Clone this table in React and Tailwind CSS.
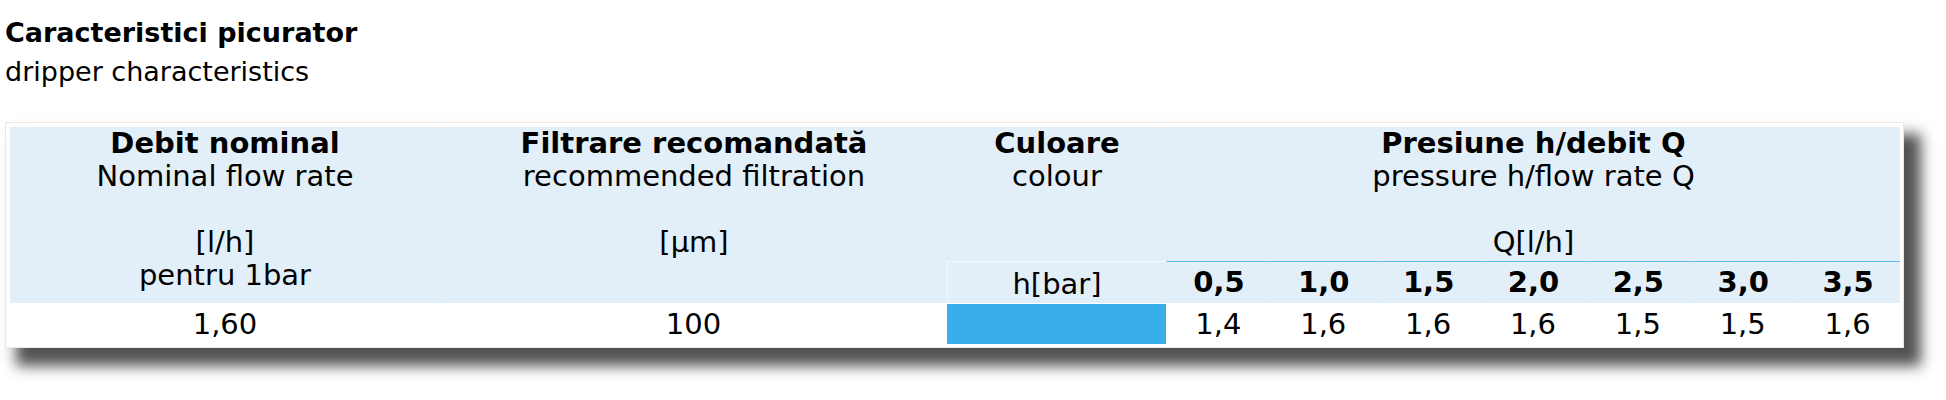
const qHeads = ["0,5", "1,0", "1,5", "2,0", "2,5", "3,0", "3,5"];
const qValues = ["1,4", "1,6", "1,6", "1,6", "1,5", "1,5", "1,6"];

export default function App() {
  return (
    <div className="min-h-screen bg-white text-black font-['DejaVu_Sans',sans-serif] pt-[13px] pl-[5px]">
      {/* Heading */}
      <div className="text-[27px] leading-[39px]">
        <div className="font-bold">Caracteristici picurator</div>
        <div>dripper characteristics</div>
      </div>

      {/* Table card */}
      <div className="mt-[31px] w-[1899px] border border-[#e9e9e9] bg-white pt-[4px] pl-[4px] pr-[3px] pb-[2px] shadow-[14px_15px_13px_3px_rgba(0,0,0,0.68)]">
        <div className="grid grid-cols-[430px_507px_219px_repeat(7,minmax(0,1fr))] grid-rows-[134px_42px_42px] text-[29px] text-center">
          {/* Header row */}
          <div className="col-start-1 row-start-1 row-span-2 bg-[#e2eff9] leading-[33px]">
            <div className="font-bold">Debit nominal</div>
            <div>Nominal flow rate</div>
            <div className="h-[33px]" />
            <div>[l/h]</div>
            <div>pentru 1bar</div>
          </div>
          <div className="col-start-2 row-start-1 row-span-2 bg-[#e2eff9] border-l border-[#e6ebef] leading-[33px]">
            <div className="font-bold">Filtrare recomandată</div>
            <div>recommended filtration</div>
            <div className="h-[33px]" />
            <div>[µm]</div>
          </div>
          <div className="col-start-3 row-start-1 bg-[#e2eff9] border-l border-[#e6ebef] leading-[33px]">
            <div className="font-bold">Culoare</div>
            <div>colour</div>
          </div>
          <div className="col-start-4 col-span-7 row-start-1 bg-[#e2eff9] border-l border-[#e6ebef] leading-[33px]">
            <div className="font-bold">Presiune h/debit Q</div>
            <div>pressure h/flow rate Q</div>
            <div className="h-[33px]" />
            <div>Q[l/h]</div>
          </div>

          {/* Sub header */}
          <div className="col-start-3 row-start-2 flex items-center justify-center pt-[4px] bg-[#e2eff9] border-t border-l border-[#f4f9fd]">
            h[bar]
          </div>
          {qHeads.map((q, i) => (
            <div
              key={q}
              className="row-start-2 flex items-center justify-center bg-[#e2eff9] border-t border-t-[#5bbcee] border-l border-l-[#e6ebef] font-bold"
              style={{ gridColumnStart: 4 + i }}
            >
              {q}
            </div>
          ))}

          {/* Data row */}
          <div className="col-start-1 row-start-3 flex items-center justify-center pt-[1px]">1,60</div>
          <div className="col-start-2 row-start-3 flex items-center justify-center pt-[1px]">100</div>
          <div className="col-start-3 row-start-3 py-[1px]">
            <div className="h-full bg-[#3aaeeb]" />
          </div>
          {qValues.map((v, i) => (
            <div
              key={i}
              className="row-start-3 flex items-center justify-center pt-[1px]"
              style={{ gridColumnStart: 4 + i }}
            >
              {v}
            </div>
          ))}
        </div>
      </div>
    </div>
  );
}
